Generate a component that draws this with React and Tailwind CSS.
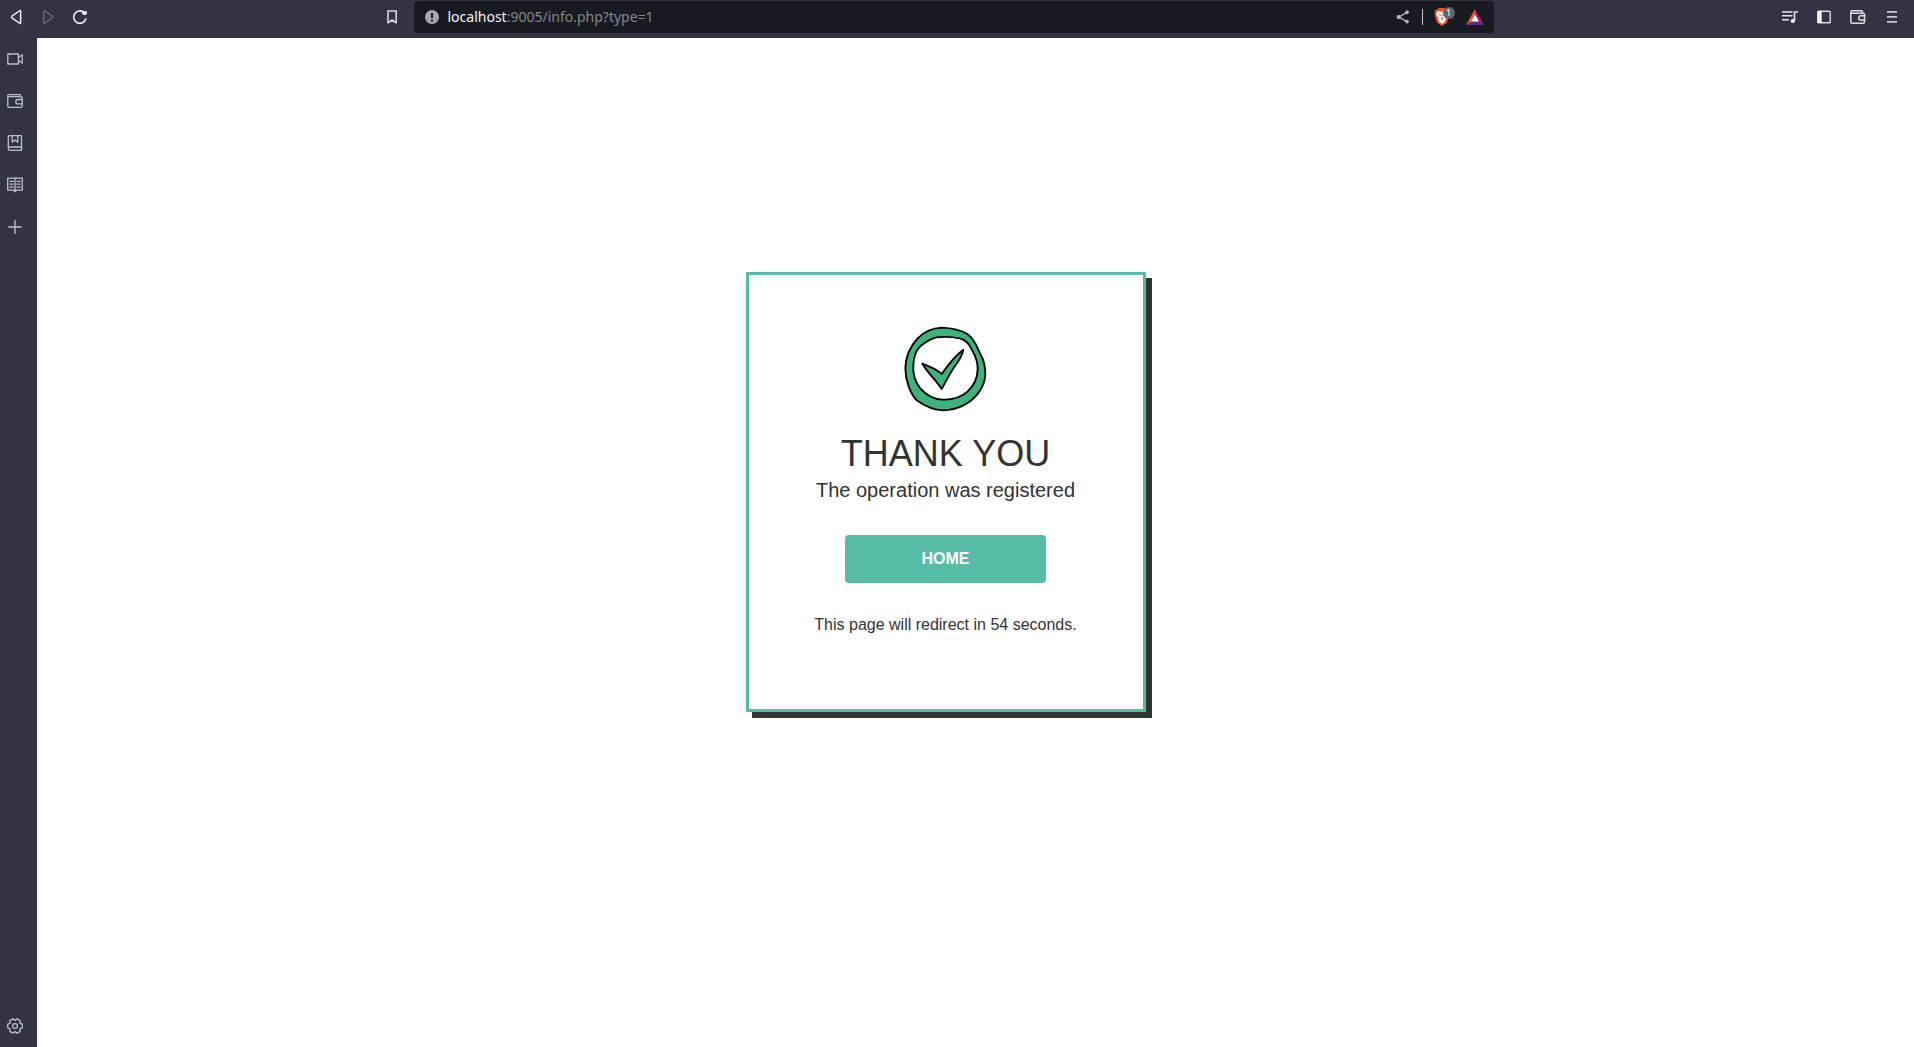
const iconButton = "flex h-8 items-center justify-center";

function BackIcon() {
  return (
    <svg width="16" height="16" viewBox="0 0 16 16" fill="none" stroke="#f1f1f4" strokeWidth="1.5" strokeLinejoin="round">
      <path d="M12.600 1.900v12.200q0 .5-.6.4L3.900 8.800q-.7-.8 0-1.600l8.100-5.700q.6-.2.6.4Z" />
    </svg>
  );
}

function ForwardIcon() {
  return (
    <svg width="16" height="16" viewBox="0 0 16 16" fill="none" stroke="#6b6d79" strokeWidth="1.3" strokeLinejoin="round">
      <path d="M3.7 1.9v12.2q0 .5.6.4l8.1-5.7q.7-.8 0-1.6L4.3 1.5q-.6-.2-.6.4Z" />
    </svg>
  );
}

function ReloadIcon() {
  return (
    <svg width="16" height="16" viewBox="0 0 16 16" fill="none">
      <path d="M13.8 10A6.2 6.2 0 1 1 11.5 3" stroke="#f1f1f4" strokeWidth="1.6" strokeLinecap="round" />
      <path d="M10.3 2.2h4q.6 0 .6.6v1.8l-1.5 1.5h-1.6L9.6 4.3Z" fill="#f1f1f4" />
    </svg>
  );
}

function BookmarkIcon() {
  return (
    <svg width="16" height="16" viewBox="0 0 16 16" fill="none" stroke="#d6d7dc" strokeWidth="1.6" strokeLinejoin="round">
      <path d="M4 2h8.2v11.8L8.1 11 4 13.800Z" />
    </svg>
  );
}

function InfoIcon() {
  return (
    <svg width="14" height="14" viewBox="0 0 14 14">
      <circle cx="7" cy="7" r="7" fill="#a3a6b1" />
      <path d="M6 3h2v5H6ZM6 9.500h2v2H6Z" fill="#181a21" />
    </svg>
  );
}

function ShareIcon() {
  return (
    <svg width="14" height="14" viewBox="0 0 14 14" fill="#bcbdc2" stroke="#bcbdc2">
      <path d="M11 2.3 3 7l8 4.7" fill="none" strokeWidth="1.3" />
      <circle cx="11" cy="2.3" r="1.7" strokeWidth=".3" />
      <circle cx="2.8" cy="7" r="1.9" strokeWidth=".3" />
      <circle cx="11" cy="11.6" r="1.7" strokeWidth=".3" />
    </svg>
  );
}

function LionIcon() {
  return (
    <svg width="16" height="18" viewBox="0 0 16 18">
      <path d="M4.8 0h6.4l1.5 1.6 1.5.1 1.3 2-.5 1.3.4 1.5-2.1 7.2-1.4 1.8L8 18l-3.9-2.500-1.4-1.800L.6 6.500 1 5 .5 3.700l1.300-2 1.500-.1Z" fill="#f4511e" />
      <path d="M4.300 3 8 3.700 11.700 3l2.200 2.600-.6 2-1.700 2.200.4 1.600-1.600 1.300.8 1.100L8 15.800l-3.200-2 .8-1.100L4 11.400l.4-1.600-1.700-2.200-.6-2Z" fill="#fff" />
      <path d="M4.500 6.200 6.900 6.900 6.500 8.200ZM11.500 6.200 9.100 6.900l.4 1.300ZM7.600 5.500h.8L8.300 9.600 9.300 10.900 8 11.700 6.700 10.900 7.700 9.600Z" fill="#f4511e" />
    </svg>
  );
}

function TriangleIcon() {
  return (
    <svg width="18" height="16" viewBox="0 0 18 16">
      <path d="M9 0 0 16l9-5.500Z" fill="#f4512c" />
      <path d="M9 0l9 16-9-5.500Z" fill="#9e1f63" />
      <path d="M0 16h18l-9-6Z" fill="#662d91" />
      <path d="M9 5.500 13 12.500H5Z" fill="#fff" />
    </svg>
  );
}

function PlaylistIcon() {
  return (
    <svg width="16" height="14" viewBox="0 0 16 14" fill="none" stroke="#e4e4e8" strokeWidth="1.6">
      <path d="M0 2h10.500M0 5.800h10.500M0 9.800h6.800M12.500 11V2H16" />
      <circle cx="10.8" cy="11" r="2.1" fill="#f4f4f6" stroke="none" />
    </svg>
  );
}

function PanelIcon() {
  return (
    <svg width="14" height="14" viewBox="0 0 14 14">
      <rect x=".8" y="1.3" width="12.4" height="11.4" rx=".8" fill="none" stroke="#dcdce0" strokeWidth="1.4" />
      <path d="M.5 1h4.200v12H.5Z" fill="#f4f4f6" />
    </svg>
  );
}

function ToolbarWalletIcon() {
  return (
    <svg width="16" height="14" viewBox="0 0 16 14" fill="none" stroke="#dcdce0" strokeWidth="1.5" strokeLinejoin="round">
      <path d="M12.500 3.300V1.800q0-1-1-1H2q-1.200 0-1.200 1.200v10q0 1.200 1.200 1.200h11q1.500 0 1.500-1.500V4.800q0-1.500-1.500-1.500H1" />
      <path d="M15.300 5.700H11q-2.200 0-2.200 2.200t2.200 2.200h4.300" />
    </svg>
  );
}

function MenuIcon() {
  return (
    <svg width="10" height="14" viewBox="0 0 10 14" stroke="#c9cad0" strokeWidth="1.7">
      <path d="M0 1.900h10M0 6.900h10M0 11.900h10" />
    </svg>
  );
}

function CameraIcon() {
  return (
    <svg width="16" height="16" viewBox="0 0 16 16" fill="none" stroke="#bdbfcb" strokeWidth="1.3" strokeLinejoin="round">
      <path d="M.8 3h10.600v10H.8ZM11.400 6.500l3.800-2.700v8.400l-3.800-2.700" />
    </svg>
  );
}

function WalletIcon() {
  return (
    <svg width="16" height="16" viewBox="0 0 16 16" fill="none" stroke="#bdbfcb" strokeWidth="1.3" strokeLinejoin="round">
      <path d="M13.500 3.700v-1q0-1-1-1H2Q.8 1.700.8 2.900V13q0 1.300 1.300 1.300h11.600q1.500 0 1.500-1.500V5.200q0-1.500-1.500-1.500H1" />
      <path d="M15.200 6.500H11q-2.200 0-2.200 2.200t2.200 2.200h4.200" />
    </svg>
  );
}

function BookIcon() {
  return (
    <svg width="16" height="16" viewBox="0 0 16 16" fill="none" stroke="#bdbfcb" strokeWidth="1.3" strokeLinejoin="round">
      <path d="M14.500 12H2.800q-1.500 0-1.500 1.600 0 1.700 1.500 1.700h11.700ZM1.300 13.600V2Q1.300.7 2.600.7h11.900V12M5.200.7v6.500L8 5l2.800 2.200V.7" />
    </svg>
  );
}

function ReaderIcon() {
  return (
    <svg width="16" height="16" viewBox="0 0 16 16" fill="none" stroke="#bdbfcb" strokeWidth="1.3">
      <path d="M.7 1.200h14.600v12H9.500L8 14.700l-1.500-1.500H.7ZM8 1.200v14M2.500 4.300h4M2.500 7.200h4M2.500 10.100h4M9.500 4.300h4M9.500 7.200h4M9.500 10.100h4" />
    </svg>
  );
}

function PlusIcon() {
  return (
    <svg width="16" height="16" viewBox="0 0 16 16" stroke="#bdbfcb" strokeWidth="1.4" strokeLinecap="round">
      <path d="M1.800 8h12.400M8 1.800v12.400" />
    </svg>
  );
}

function GearIcon() {
  return (
    <svg width="16" height="16" viewBox="0 0 16 16" fill="none" stroke="#bdbfcb" strokeWidth="1.3" strokeLinejoin="round">
      <path d="M15.300 6.200v3.600L12.900 10.800 13.200 13.400 10.100 15.200 8 13.600 5.900 15.200 2.800 13.400 3.100 10.800.7 9.800V6.200L3.100 5.200 2.800 2.600 5.900.8 8 2.400 10.100.8 13.200 2.600 12.900 5.200Z" />
      <circle cx="8" cy="8" r="2.400" />
    </svg>
  );
}

function SuccessMark() {
  return (
    <svg className="mx-auto" width="110" height="105" viewBox="3 0 330 315" stroke="#000" strokeWidth="5.5" strokeLinejoin="round" role="img" aria-label="Success">
      <path
        fill="#3bb37a"
        d="M155 38C185 39 215 47 233 58C255 73 262 100 272 119C284 139 286 155 286 178C285 205 277 220 262 238C238 266 200 284 160 286C128 286 101 271 80 256C63 238 46 200 46 160C47 120 62 92 83 70C104 49 130 39 155 38Z"
      />
      <path
        fill="#fff"
        d="M140 67C158 65 190 66 209 70C231 75 239 91 247 107C260 129 264 145 263 164C262 188 252 212 233 229C213 247 188 255 158 254C129 252 108 240 91 220C75 200 68 175 70 150C71 127 77 106 93 92C108 80 124 70 140 67Z"
      />
      <path
        fill="#3bb37a"
        d="M97 146C118 155 139 161 155 177C171 154 194 123 220 104C217 123 205 140 195 153C180 174 169 198 155 222C137 195 113 173 97 146Z"
      />
    </svg>
  );
}

const sideItems = [
  { label: "Talk", Icon: CameraIcon },
  { label: "Wallet", Icon: WalletIcon },
  { label: "Bookmarks", Icon: BookIcon },
  { label: "Reading list", Icon: ReaderIcon },
  { label: "Add", Icon: PlusIcon },
];

const endItems = [
  { label: "Media playlist", Icon: PlaylistIcon },
  { label: "Toggle sidebar", Icon: PanelIcon },
  { label: "Open wallet", Icon: ToolbarWalletIcon },
  { label: "Menu", Icon: MenuIcon },
];

function Toolbar() {
  return (
    <header className="flex h-[38px] shrink-0 items-start bg-[#323443] pt-px">
      <nav className="flex" aria-label="History">
        <button className={`${iconButton} w-8`} aria-label="Back"><BackIcon /></button>
        <button className={`${iconButton} w-8`} aria-label="Forward" disabled><ForwardIcon /></button>
        <button className={`${iconButton} w-8`} aria-label="Reload"><ReloadIcon /></button>
      </nav>
      <div className="flex flex-1 justify-center">
        <div className="flex w-full max-w-[1118px] gap-[6px]">
          <button className={`${iconButton} w-8`} aria-label="Bookmark this page"><BookmarkIcon /></button>
          <div className="flex h-8 flex-1 items-center rounded bg-[#181a21] pr-[10px] pl-[11px]">
            <button aria-label="Site information"><InfoIcon /></button>
            <a href="#address" className="ml-[9px] flex-1 font-['Noto_Sans',sans-serif] text-[14px] leading-5 text-[#85868b]">
              <span className="text-[#f4f4f6]">localhost</span>:9005/info.php?type=1
            </a>
            <button aria-label="Share"><ShareIcon /></button>
            <span className="mr-[11px] ml-3 h-4 w-px bg-[#c4c5ca]" />
            <button className="relative" aria-label="Shields, 1 blocked">
              <LionIcon />
              <span className="absolute -top-px left-[9px] flex h-3 w-3 items-center justify-center rounded-full bg-[#63656f] font-['Noto_Sans',sans-serif] text-[9px] leading-3 text-white">1</span>
            </button>
            <button className="ml-4" aria-label="Rewards"><TriangleIcon /></button>
          </div>
        </div>
      </div>
      <nav className="flex pr-[5px]" aria-label="Browser">
        {endItems.map(({ label, Icon }) => (
          <button key={label} className={`${iconButton} w-[34px]`} aria-label={label}><Icon /></button>
        ))}
      </nav>
    </header>
  );
}

function Sidebar() {
  return (
    <aside className="flex w-[37px] shrink-0 flex-col justify-between bg-[#323443] pr-[7px] pb-[5px]">
      <nav className="flex flex-col gap-[10px] pt-[5px]" aria-label="Sidebar">
        {sideItems.map(({ label, Icon }) => (
          <button key={label} className={iconButton} aria-label={label}><Icon /></button>
        ))}
      </nav>
      <button className={iconButton} aria-label="Settings"><GearIcon /></button>
    </aside>
  );
}

export default function App() {
  return (
    <div className="flex min-h-screen flex-col bg-white font-['Liberation_Sans',Arial,sans-serif] text-[#333]">
      <Toolbar />
      <div className="flex flex-1">
        <Sidebar />
        <main className="flex flex-1 items-center justify-center pr-[60px] pb-[102px]">
          <section className="w-full max-w-[400px] border-[3px] border-[#57bca5] bg-white px-10 pt-10 pb-[72px] text-center shadow-[6px_6px_0_#333]">
            <SuccessMark />
            <h1 className="mt-[14px] text-4xl">THANK YOU</h1>
            <p className="mt-1 text-xl leading-6">The operation was registered</p>
            <a href="#home" className="mx-auto mt-[33px] flex h-12 w-[201px] items-center justify-center rounded bg-[#57bca5] font-bold text-white">
              HOME
            </a>
            <p className="mt-[30px] leading-6">This page will redirect in 54 seconds.</p>
          </section>
        </main>
      </div>
    </div>
  );
}
